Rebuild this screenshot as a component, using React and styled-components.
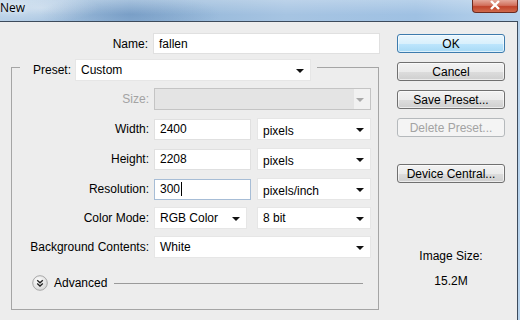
import React from 'react';
import styled, { createGlobalStyle } from 'styled-components';

const Global = createGlobalStyle`
  html, body { margin: 0; padding: 0; background: #ededed; }
  body { font-family: "Liberation Sans", Arial, sans-serif; font-size: 12px; color: #000; }
`;

const Window = styled.div`
  width: 520px;
  height: 320px;
  overflow: hidden;
  display: flex;
  flex-direction: column;
  background: linear-gradient(90deg, #b9d1e8 0%, #8fb3d6 25%, #a6c4e2 55%, #9fc1e3 80%, #b8d3ec 100%);
`;

const TitleBar = styled.div`
  height: 21px;
  flex: none;
  display: flex;
  align-items: flex-start;
  justify-content: space-between;
  background: linear-gradient(180deg, rgba(255,255,255,0.25), rgba(255,255,255,0) 70%),
    radial-gradient(ellipse 90px 20px at 130px 14px, rgba(80,120,170,0.35), transparent),
    radial-gradient(ellipse 60px 14px at 40px 8px, rgba(255,255,255,0.35), transparent);
`;

const Title = styled.span`
  font-family: "Open Sans", "Liberation Sans", sans-serif;
  font-size: 12px;
  line-height: 15px;
  color: #000;
  text-shadow: 0 0 6px rgba(255,255,255,0.9);
`;

const CloseButton = styled.div`
  flex: none;
  width: 46px;
  height: 13px;
  box-sizing: border-box;
  margin-right: 2px;
  border: 1px solid #6b2b20;
  border-top: none;
  border-radius: 0 0 4px 4px;
  background: linear-gradient(180deg, #e4a89a 0%, #d2705c 45%, #c0432a 55%, #d06a4c 100%);
  display: flex;
  align-items: flex-start;
  justify-content: center;
`;

const Frame = styled.div`
  flex: 1;
  display: flex;
  background: #ededed;
  border-top: 1px solid #3d4b5c;
  border-right: 1px solid #3d4b5c;
  margin-right: 2px;
`;

const LeftColumn = styled.div`
  width: 385px;
  flex: none;
  padding-top: 11px;
`;

const RightColumn = styled.div`
  flex: 1;
  display: flex;
  flex-direction: column;
  padding: 12px 0 0 12px;
`;

const Row = styled.div`
  display: flex;
  align-items: center;
  gap: 6px;
  margin-top: ${p => p.$mt || 0}px;
`;

const Label = styled.label`
  width: ${p => p.$w}px;
  box-sizing: border-box;
  padding-right: 5px;
  margin-right: -6px;
  text-align: right;
  white-space: nowrap;
  color: ${p => (p.$disabled ? '#a3a3a3' : '#000')};
`;

const Field = styled.div`
  width: ${p => p.$w}px;
  height: 21px;
  box-sizing: border-box;
  flex: none;
  display: flex;
  align-items: center;
  padding-left: 5px;
  background: #fff;
  border: 1px solid ${p => (p.$focus ? '#a7bdd6' : '#e0e0e0')};
  white-space: nowrap;
`;

const Caret = styled.span`
  display: inline-block;
  width: 1px;
  height: 14px;
  margin-left: 1px;
  background: #000;
`;

const Select = styled.div`
  position: relative;
  width: ${p => p.$w}px;
  height: 22px;
  box-sizing: border-box;
  flex: none;
  display: flex;
  align-items: center;
  padding-left: 5px;
  padding-top: ${p => (p.$low ? 3 : 0)}px;
  background: ${p => (p.$disabled ? 'linear-gradient(90deg, #e4e4e4 0, #e4e4e4 calc(100% - 16px), #f1f1f1 calc(100% - 16px))' : '#fff')};
  border: 1px solid ${p => (p.$disabled ? '#c4c4c4' : '#e6e6e6')};
  white-space: nowrap;

  &::after {
    content: '';
    position: absolute;
    right: 6px;
    top: 9px;
    border-left: 4px solid transparent;
    border-right: 4px solid transparent;
    border-top: 4px solid ${p => (p.$disabled ? '#a9a9a9' : '#111')};
  }
`;

const Group = styled.div`
  margin: 5px 0 0 11px;
  width: 368px;
`;

const GroupHeader = styled.div`
  display: flex;
  align-items: center;
  height: 22px;
`;

const Cap = styled.div`
  align-self: flex-end;
  height: 14px;
  box-sizing: border-box;
  border-top: 1px solid #a5a5a5;
  ${p => (p.$right
    ? 'flex: 1; margin-left: 6px; border-right: 1px solid #a5a5a5;'
    : 'width: 9px; margin-right: 13px; border-left: 1px solid #a5a5a5;')}
`;

const HeaderLabel = styled.span`
  margin-right: 4px;
`;

const GroupBody = styled.div`
  height: 229px;
  box-sizing: border-box;
  padding-top: 7px;
  border: 1px solid #a5a5a5;
  border-top: none;
`;

const AdvancedRow = styled.div`
  display: flex;
  align-items: center;
  margin: 17px 0 0 20px;
  gap: 6px;
`;

const AdvancedText = styled.span`
  line-height: 15px;
`;

const Rule = styled.div`
  width: 249px;
  height: 1px;
  margin-left: 1px;
  background: #9a9a9a;
`;

const Button = styled.div`
  width: 108px;
  height: 19px;
  box-sizing: border-box;
  margin-top: ${p => p.$mt || 0}px;
  display: flex;
  align-items: center;
  justify-content: center;
  border-radius: 3px;
  border: 1px solid ${p => (p.$primary ? '#3d7bad' : p.$disabled ? '#b5b9bc' : '#707070')};
  color: ${p => (p.$disabled ? '#a3a3a3' : '#000')};
  background: ${p =>
    p.$primary
      ? 'linear-gradient(180deg, #eaf6fd 0%, #d9f0fc 50%, #bee6fd 51%, #a7d9f5 100%)'
      : p.$disabled
      ? '#f4f4f4'
      : 'linear-gradient(180deg, #f2f2f2 0%, #ebebeb 50%, #dddddd 51%, #cfcfcf 100%)'};
  box-shadow: inset 0 0 0 1px ${p => (p.$disabled ? 'transparent' : 'rgba(255,255,255,0.6)')};
`;

const Info = styled.div`
  width: 108px;
  text-align: center;
  line-height: 15px;
  margin-top: ${p => p.$mt || 0}px;
`;

function ExpandIcon() {
  return (
    <svg width="16" height="16" viewBox="0 0 16 16">
      <defs>
        <radialGradient id="ball" cx="0.4" cy="0.35" r="0.7">
          <stop offset="0" stopColor="#ffffff" />
          <stop offset="1" stopColor="#d6d6d6" />
        </radialGradient>
      </defs>
      <circle cx="8" cy="8" r="7.3" fill="url(#ball)" stroke="#a8a8a8" strokeWidth="1" />
      <path d="M5.2 5.2 L8 7.8 L10.8 5.2 M5.2 8.4 L8 11 L10.8 8.4" fill="none" stroke="#222" strokeWidth="1.3" />
    </svg>
  );
}

function CloseGlyph() {
  return (
    <svg width="12" height="11" viewBox="0 0 12 11">
      <path d="M2 1 L10 9 M10 1 L2 9" stroke="#fff" strokeWidth="2.4" />
    </svg>
  );
}

export default function App() {
  return (
    <Window>
      <Global />
      <TitleBar>
        <Title>New</Title>
        <CloseButton><CloseGlyph /></CloseButton>
      </TitleBar>
      <Frame>
        <LeftColumn>
          <Row>
            <Label $w={153}>Name:</Label>
            <Field $w={227}>fallen</Field>
          </Row>
          <Group>
            <GroupHeader>
              <Cap />
              <HeaderLabel>Preset:</HeaderLabel>
              <Select $w={236}>Custom</Select>
              <Cap $right />
            </GroupHeader>
            <GroupBody>
              <Row>
                <Label $w={142} $disabled>Size:</Label>
                <Select $w={217} $disabled />
              </Row>
              <Row $mt={8}>
                <Label $w={142}>Width:</Label>
                <Field $w={97}>2400</Field>
                <Select $w={114} $low>pixels</Select>
              </Row>
              <Row $mt={8}>
                <Label $w={142}>Height:</Label>
                <Field $w={97}>2208</Field>
                <Select $w={114} $low>pixels</Select>
              </Row>
              <Row $mt={8}>
                <Label $w={142}>Resolution:</Label>
                <Field $w={97} $focus>300<Caret /></Field>
                <Select $w={114} $low>pixels/inch</Select>
              </Row>
              <Row $mt={7}>
                <Label $w={142}>Color Mode:</Label>
                <Select $w={93}>RGB Color</Select>
                <Select $w={114} style={{ marginLeft: 4 }}>8 bit</Select>
              </Row>
              <Row $mt={7}>
                <Label $w={142}>Background Contents:</Label>
                <Select $w={217}>White</Select>
              </Row>
              <AdvancedRow>
                <ExpandIcon />
                <AdvancedText>Advanced</AdvancedText>
                <Rule />
              </AdvancedRow>
            </GroupBody>
          </Group>
        </LeftColumn>
        <RightColumn>
          <Button $primary>OK</Button>
          <Button $mt={9}>Cancel</Button>
          <Button $mt={9}>Save Preset...</Button>
          <Button $mt={9} $disabled>Delete Preset...</Button>
          <Button $mt={27}>Device Central...</Button>
          <Info $mt={66}>Image Size:</Info>
          <Info $mt={10}>15.2M</Info>
        </RightColumn>
      </Frame>
    </Window>
  );
}
